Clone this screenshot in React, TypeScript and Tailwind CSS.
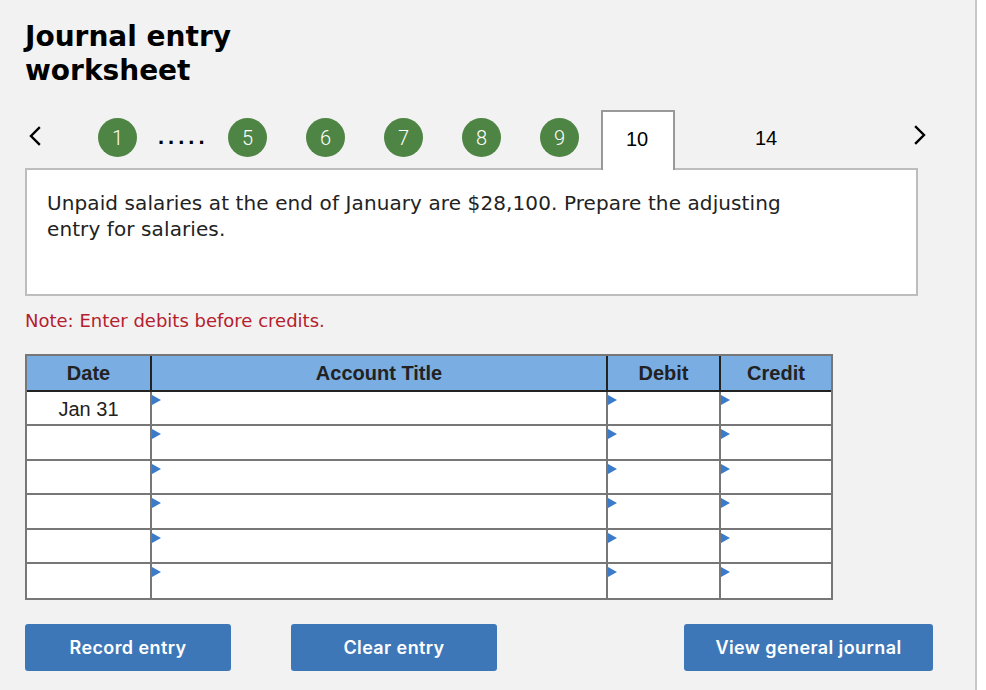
import React from 'react';

const steps = ['1', '5', '6', '7', '8', '9'];
const rows = ['Jan 31', '', '', '', '', ''];

const Marker = () => (
  <span className="absolute left-0 top-[3px] w-0 h-0 border-y-[5px] border-y-transparent border-l-[9px] border-l-[#3b7bc9]" />
);

const Chevron = ({ dir }: { dir: 'left' | 'right' }) => (
  <svg width="14" height="22" viewBox="0 0 14 22" fill="none" stroke="#000" strokeWidth="2.4" strokeLinecap="square">
    {dir === 'left' ? <path d="M11 3 L3 11 L11 19" /> : <path d="M3 3 L11 11 L3 19" />}
  </svg>
);

export default function App() {
  return (
    <div className="w-[977px] h-[690px] bg-[#f2f2f2] border-r-2 border-[#c8c8c8] overflow-hidden">
      <div className="pl-[25px] pt-[20px]">
        {/* Title */}
        <h1 className="font-['DejaVu_Sans',sans-serif] font-bold text-[28px] leading-[34px] text-black">
          Journal entry
          <br />
          worksheet
        </h1>

        {/* Step navigation */}
        <div className="flex items-center mt-[19px] h-[61px] relative z-10">
          <div className="ml-[3px] mt-[-4px]">
            <Chevron dir="left" />
          </div>
          {steps.map((s, i) => (
            <React.Fragment key={s}>
              <div
                className={`w-[39px] h-[39px] rounded-full bg-[#4f8544] flex items-center justify-center text-white text-[20px] font-light font-['Roboto',sans-serif] ${
                  i === 0 ? 'ml-[56px]' : i === 1 ? 'ml-[22px]' : 'ml-[39px]'
                }`}
              >
                {s}
              </div>
              {i === 0 && (
                <span className="ml-[21px] w-[48px] text-[22px] tracking-[4px] font-bold leading-none mt-[-2px] font-['Liberation_Sans',sans-serif]">
                  .....
                </span>
              )}
            </React.Fragment>
          ))}
          <div className="ml-[22px] self-end w-[74px] h-[60px] mb-[-2px] bg-white border-2 border-b-0 border-[#999] flex items-center justify-center pb-[4px] pr-[2px] text-[20px] font-['Liberation_Sans',sans-serif] text-black">
            10
          </div>
          <div className="w-[74px] ml-[54px] flex justify-center text-[20px] font-['Liberation_Sans',sans-serif] text-black">
            14
          </div>
          <div className="ml-[110px] mt-[-6px]">
            <Chevron dir="right" />
          </div>
        </div>

        {/* Question */}
        <div className="w-[893px] h-[128px] bg-white border-2 border-[#bdbdbd] pl-[20px] pt-[20px] font-['DejaVu_Sans',sans-serif] text-[20px] leading-[26px] tracking-[0.1px] text-[#222]">
          Unpaid salaries at the end of January are $28,100. Prepare the adjusting
          <br />
          entry for salaries.
        </div>

        <p className="mt-[13px] font-['DejaVu_Sans',sans-serif] text-[18px] leading-[24px] text-[#b5202e]">
          Note: Enter debits before credits.
        </p>

        {/* Journal table */}
        <div className="mt-[21px] w-[808px] border-2 border-[#777] font-['Liberation_Sans',sans-serif] text-[20px]">
          <div className="flex h-[36px] bg-[#7aade2] border-b-2 border-[#222] font-bold text-[#222]">
            <div className="w-[125px] flex items-center justify-center border-r-2 border-[#222]">Date</div>
            <div className="w-[456px] flex items-center justify-center border-r-2 border-[#222]">Account Title</div>
            <div className="w-[113px] flex items-center justify-center border-r-2 border-[#222]">Debit</div>
            <div className="flex-1 flex items-center justify-center">Credit</div>
          </div>
          {rows.map((d, i) => (
            <div key={i} className={`flex h-[34.4px] bg-white ${i < rows.length - 1 ? 'border-b-2 border-[#777]' : ''}`}>
              <div className="w-[125px] flex items-center justify-center border-r-2 border-[#777] text-[#222] pt-[2px]">{d}</div>
              <div className="w-[456px] relative border-r-2 border-[#777]">
                <Marker />
              </div>
              <div className="w-[113px] relative border-r-2 border-[#777]">
                <Marker />
              </div>
              <div className="flex-1 relative">
                <Marker />
              </div>
            </div>
          ))}
        </div>

        {/* Actions */}
        <div className="flex mt-[24px] font-['Inter',sans-serif] font-semibold text-[18px] text-white tracking-[0.4px]">
          <button className="w-[206px] h-[47px] rounded-[3px] bg-[#3d77b8]">Record entry</button>
          <button className="ml-[60px] w-[206px] h-[47px] rounded-[3px] bg-[#3d77b8]">Clear entry</button>
          <button className="ml-[187px] w-[249px] h-[47px] rounded-[3px] bg-[#3d77b8]">View general journal</button>
        </div>
      </div>
    </div>
  );
}
